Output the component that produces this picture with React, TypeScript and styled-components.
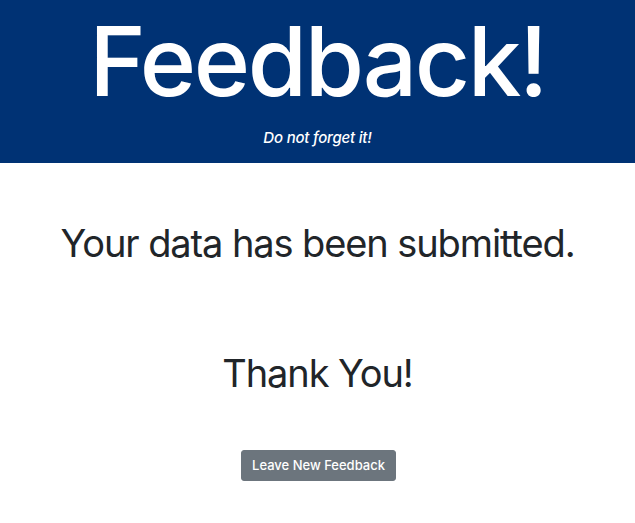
import React from 'react';
import styled, { createGlobalStyle } from 'styled-components';

const GlobalStyle = createGlobalStyle`
  body {
    margin: 0;
    background: #fff;
    font-family: Inter, "Noto Sans", sans-serif;
    color: #212529;
  }
`;

const App: React.FC = () => {
  return (
    <>
      <GlobalStyle />
      <Header>
        <Title>Feedback!</Title>
        <Tagline>Do not forget it!</Tagline>
      </Header>
      <Main>
        <Message>Your data has been submitted.</Message>
        <Message $gap={84}>Thank You!</Message>
        <Button type='button'>Leave New Feedback</Button>
      </Main>
    </>
  );
};

const Header = styled.header`
  background-color: #003274;
  color: #fff;
  height: 163px;
  display: flex;
  flex-direction: column;
  align-items: center;
`;

const Title = styled.h1`
  margin: 9px 0 0;
  font-size: 96px;
  font-weight: 500;
  line-height: 1.1;
  letter-spacing: -2.4px;
`;

const Tagline = styled.p`
  margin: 13px 0 0;
  font-size: 15px;
  font-weight: 500;
  font-style: italic;
  letter-spacing: -0.2px;
`;

const Main = styled.main`
  display: flex;
  flex-direction: column;
  align-items: center;
`;

const Message = styled.h2<{ $gap?: number }>`
  margin: ${({ $gap = 58 }) => $gap}px 0 0;
  font-size: 38px;
  font-weight: 400;
  line-height: 1.2;
  letter-spacing: -1.1px;
`;

const Button = styled.button`
  margin: 54px 0 0 2px;
  background-color: #6c757d;
  border: 1px solid #6c757d;
  color: #fff;
  font-family: inherit;
  font-size: 13px;
  font-weight: 500;
  padding: 6px 10px 7px;
  border-radius: 3px;
  cursor: pointer;
`;

export default App;
